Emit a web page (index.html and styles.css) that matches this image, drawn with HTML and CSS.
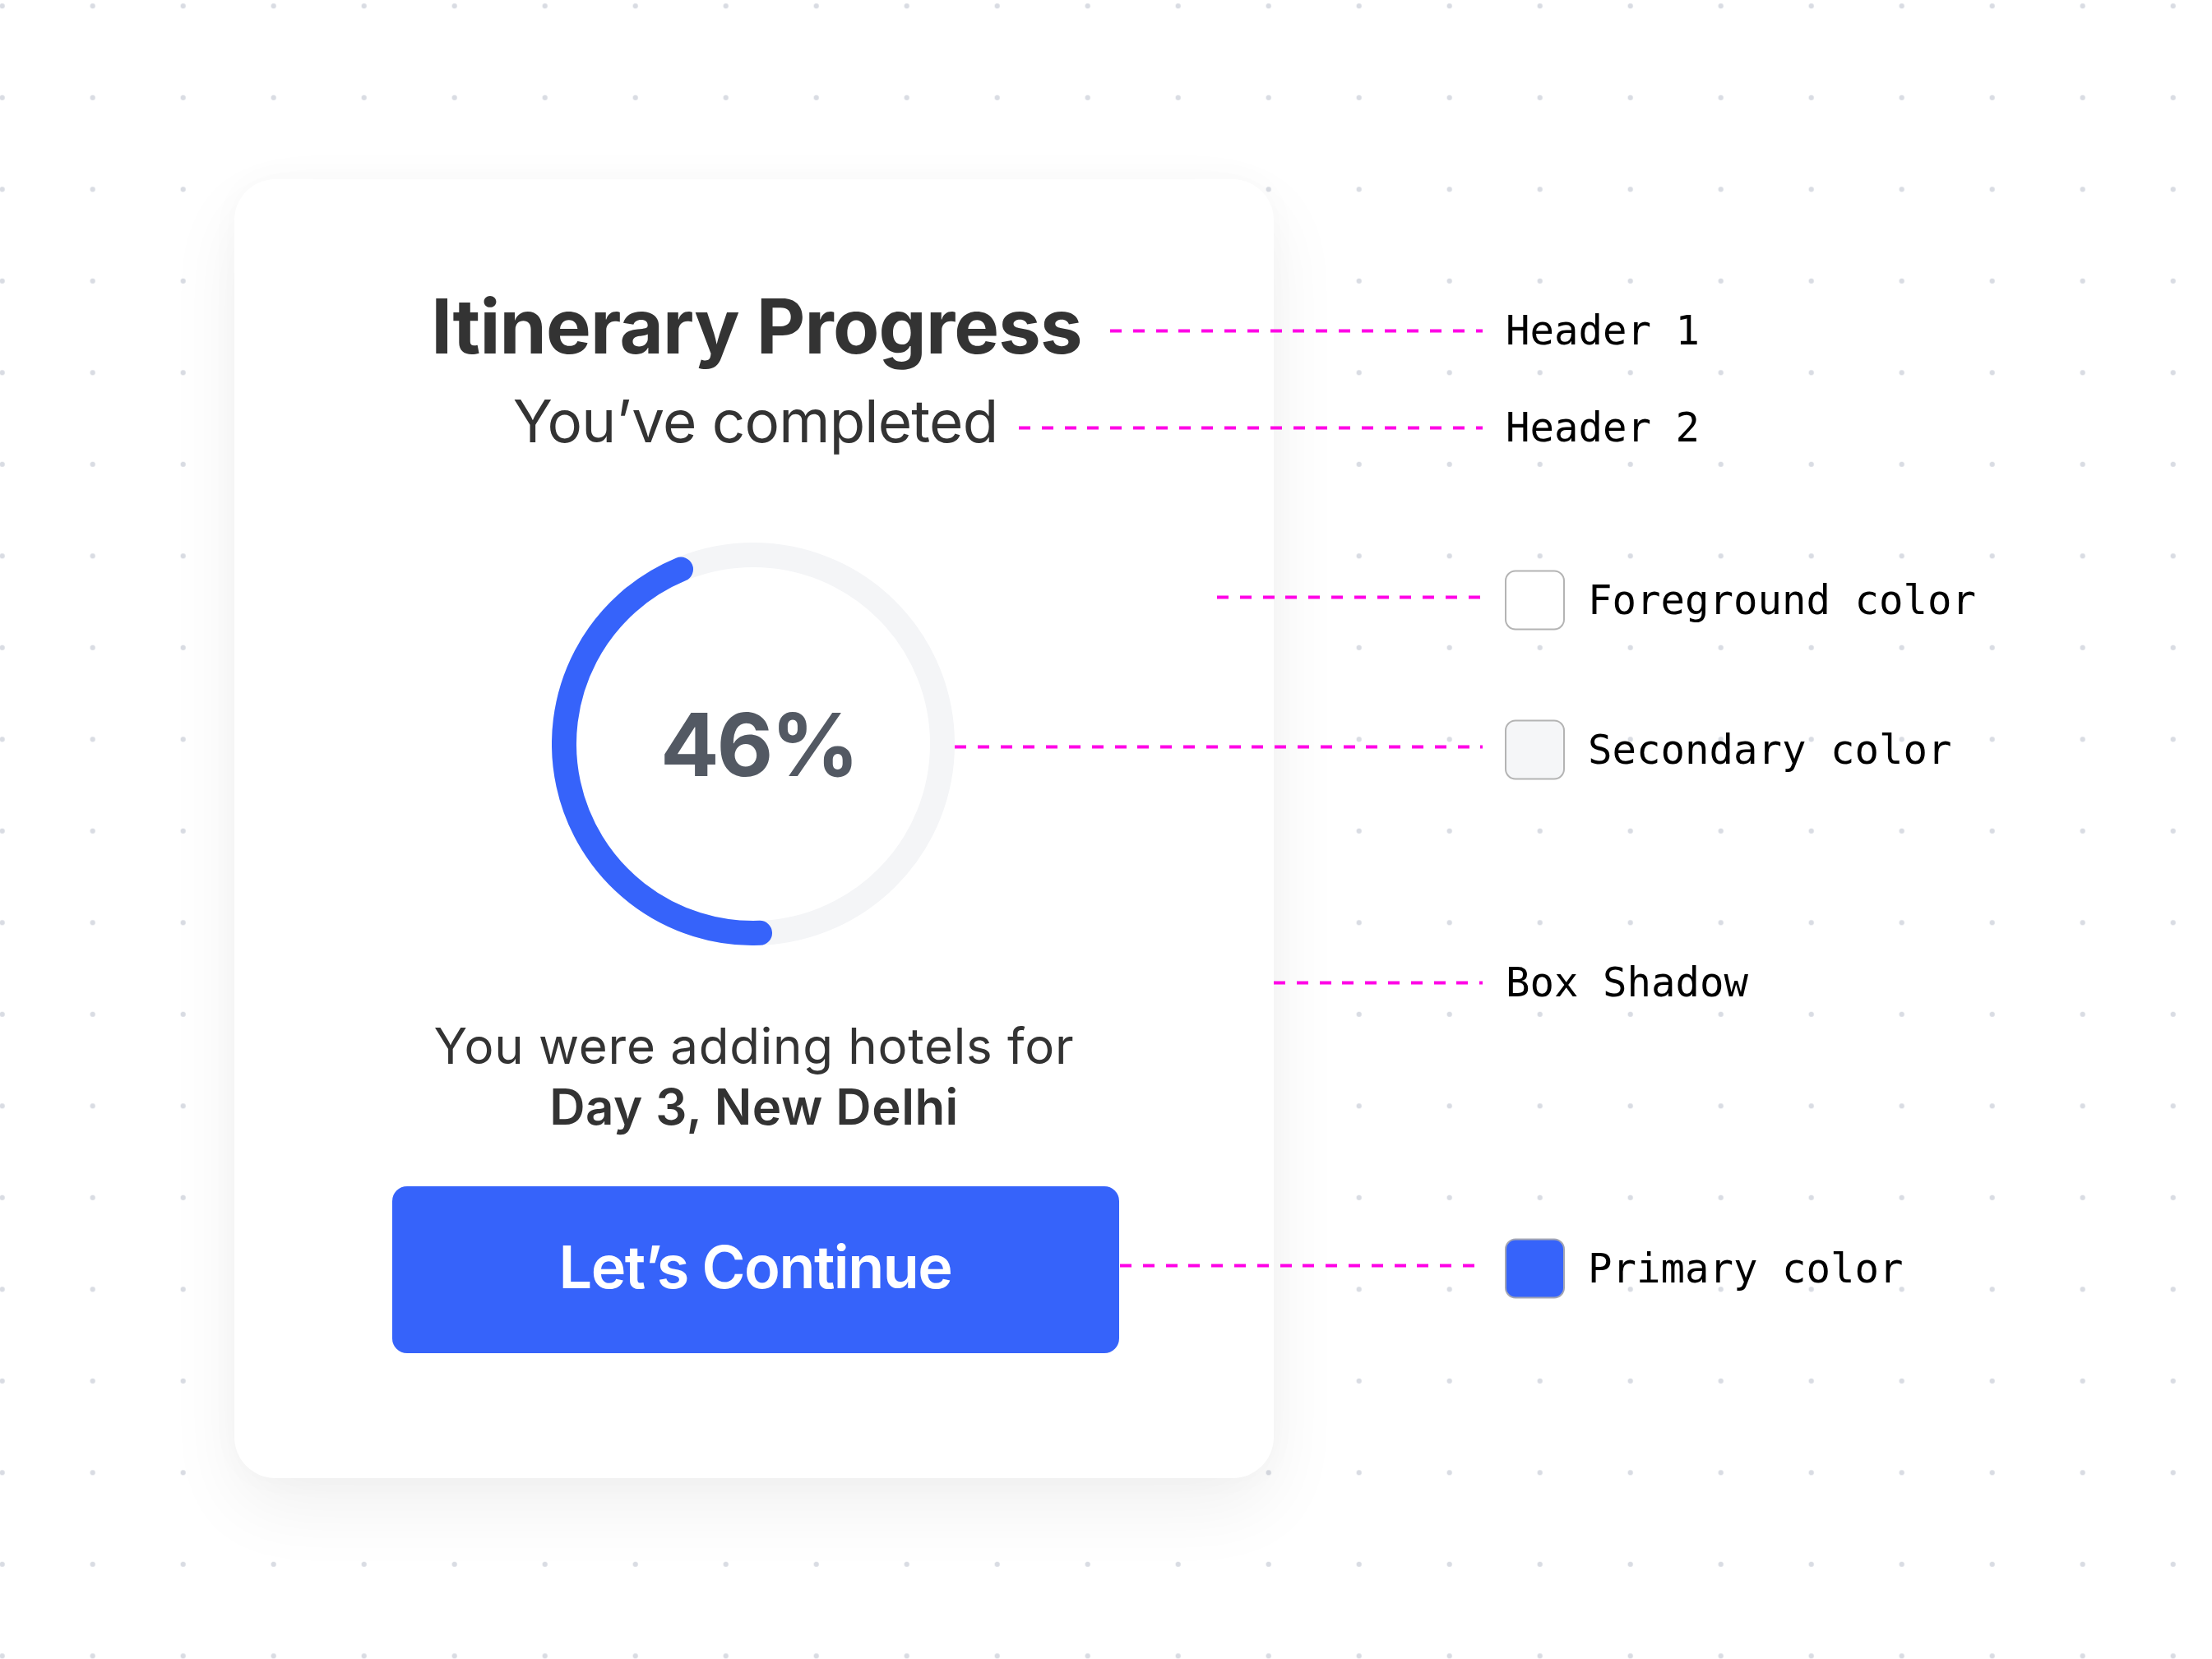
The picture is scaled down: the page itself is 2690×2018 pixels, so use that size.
FILE: index.html
```html
<!DOCTYPE html>
<html lang="en">
<head>
<meta charset="utf-8">
<title>Itinerary Progress</title>
<link rel="stylesheet" href="styles.css">
</head>
<body>
<div class="stage">
  <section class="card">
    <h1 class="title">Itinerary Progress</h1>
    <h2 class="subtitle">You’ve completed</h2>
    <div class="progress">
      <svg class="ring" width="490" height="490" viewBox="0 0 490 490">
        <circle class="track" cx="245" cy="245" r="230"></circle>
        <path class="bar" d="M 253.03 474.86 A 230 230 0 0 1 157.0 32.5"></path>
      </svg>
      <div class="percent">46%</div>
    </div>
    <p class="note">You were adding hotels for<br><strong>Day 3, New Delhi</strong></p>
    <button class="cta">Let’s Continue</button>
  </section>

  <div class="callout c-h1"><span class="dash"></span><span class="label">Header 1</span></div>
  <div class="callout c-h2"><span class="dash"></span><span class="label">Header 2</span></div>
  <div class="callout swatch-row c-fg"><span class="dash"></span><span class="swatch sw-fg"></span><span class="label">Foreground color</span></div>
  <div class="callout swatch-row c-sec"><span class="dash"></span><span class="swatch sw-sec"></span><span class="label">Secondary color</span></div>
  <div class="callout c-shadow"><span class="dash"></span><span class="label">Box Shadow</span></div>
  <div class="callout swatch-row c-pri"><span class="dash"></span><span class="swatch sw-pri"></span><span class="label">Primary color</span></div>
</div>
</body>
</html>
```
FILE: styles.css
```css
html, body {
  margin: 0;
  padding: 0;
}

body {
  background-color: #ffffff;
  background-image: radial-gradient(circle, #d9dce3 0, #d9dce3 2.8px, rgba(217,220,227,0) 3.6px);
  background-size: 110px 111.5px;
  background-position: -52.3px -48.45px;
  font-family: Inter, "Noto Sans", sans-serif;
  color: #333333;
}

.stage {
  position: relative;
  box-sizing: border-box;
  width: 2690px;
  min-height: 2018px;
  padding: 218px 0 0 285px;
}

.card {
  box-sizing: border-box;
  width: 1264px;
  height: 1580px;
  background: #ffffff;
  border-radius: 50px;
  box-shadow: 0 36px 90px rgba(0, 0, 0, 0.06), 0 0 40px rgba(0, 0, 0, 0.025);
  display: flex;
  flex-direction: column;
  align-items: center;
  padding: 133px 0 0 0;
}

.title {
  margin: 0 0 0 6px;
  font-size: 92px;
  line-height: 1;
  font-weight: 700;
  color: #333333;
  letter-spacing: -0.8px;
}

.subtitle {
  margin: 34px 0 0 3px;
  font-size: 71px;
  line-height: 1;
  font-weight: 400;
  color: #333333;
  letter-spacing: -0.8px;
}

.progress {
  margin-top: 111.5px;
  width: 490px;
  height: 490px;
  display: grid;
  place-items: center;
  margin-left: -3px;
}

.ring {
  grid-area: 1 / 1;
  display: block;
}

.track {
  fill: none;
  stroke: #f4f5f7;
  stroke-width: 30;
}

.bar {
  fill: none;
  stroke: #3663fa;
  stroke-width: 30;
  stroke-linecap: round;
}

.percent {
  grid-area: 1 / 1;
  font-size: 106px;
  line-height: 1;
  font-weight: 700;
  color: #535963;
  letter-spacing: -3px;
  margin-left: 14px;
  margin-top: 3px;
}

.note {
  margin: 85px 0 0 0;
  font-size: 60px;
  line-height: 74px;
  text-align: center;
  color: #333333;
  letter-spacing: 0.75px;
}

.note strong {
  font-weight: 600;
  letter-spacing: 0.5px;
}

.cta {
  margin: 60px 0 0 3px;
  width: 884px;
  height: 203px;
  border: 0;
  border-radius: 18px;
  background: #3663fa;
  color: #ffffff;
  font-family: Inter, "Noto Sans", sans-serif;
  font-size: 72px;
  font-weight: 600;
  line-height: 1;
  letter-spacing: -1.5px;
  padding: 0 0 6px 0;
  display: flex;
  align-items: center;
  justify-content: center;
}

/* annotation callouts */
.callout {
  position: absolute;
  left: var(--x);
  top: var(--y);
  transform: translateY(-50%);
  display: flex;
  align-items: center;
}

.dash {
  display: block;
  width: calc(1803px - var(--x));
  height: 4px;
  margin-right: 28px;
  background: repeating-linear-gradient(to right, #ff00e6 0, #ff00e6 14px, rgba(255,0,230,0) 14px, rgba(255,0,230,0) 27.8px);
}

.swatch-row .dash {
  margin-top: -7px;
  margin-right: 27px;
}

.label {
  font-family: "DejaVu Sans Mono", "Liberation Mono", monospace;
  font-size: 49px;
  line-height: 1;
  color: #000000;
  white-space: pre;
}

.swatch {
  box-sizing: border-box;
  width: 73px;
  height: 73px;
  border: 2px solid #b4b4b4;
  border-radius: 13px;
  margin-right: 28px;
}

.sw-fg { background: #ffffff; }
.sw-sec { background: #f5f6f8; }
.sw-pri { background: #3663fa; border-color: #a3a6b4; }

.c-h1 { --x: 1350px; --y: 402px; }
.c-h2 { --x: 1239px; --y: 520px; }
.c-fg { --x: 1480px; --y: 729.5px; }
.c-sec { --x: 1161px; --y: 911.5px; }
.c-shadow { --x: 1549px; --y: 1195px; }
.c-pri { --x: 1362px; --y: 1543px; }
```
